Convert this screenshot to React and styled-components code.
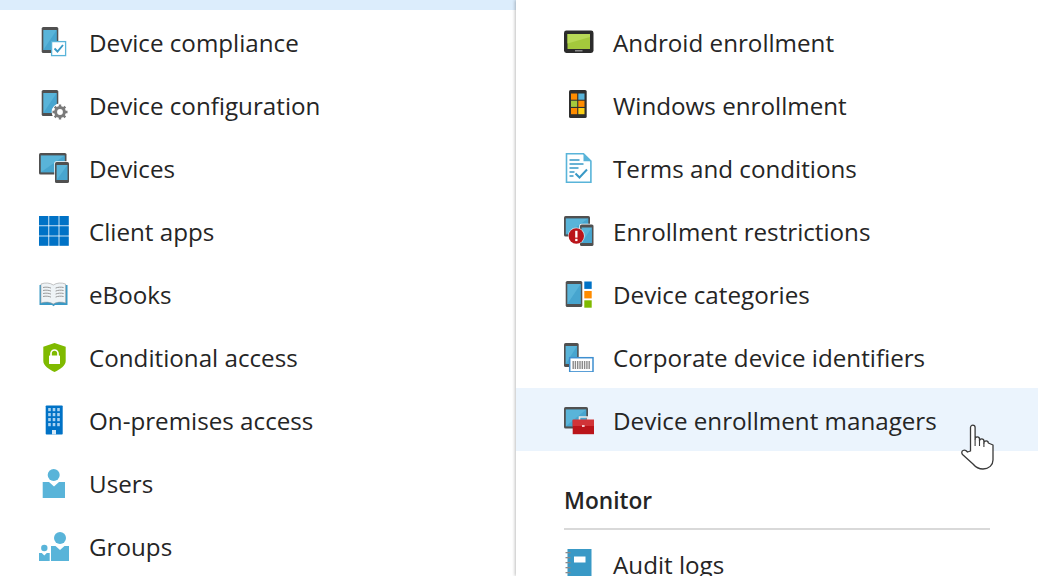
import React from "react";
import styled, { createGlobalStyle } from "styled-components";

const Global = createGlobalStyle`
  html, body { margin: 0; padding: 0; background: #fff; }
  body { width: 1038px; height: 576px; overflow: hidden; font-family: "Open Sans", "Noto Sans", sans-serif; }
`;

const Phone = ({ x, y, w, h, stroke = "#505050" }) => (
  <g>
    <rect x={x} y={y} width={w} height={h} rx="1.6" fill={stroke} />
    <rect x={x + 1.6} y={y + 3} width={w - 3.2} height={h - 6} fill="#59b4d9" />
    <path d={`M${x + w - 1.6} ${y + 3}V${y + h - 3}H${x + 1.6}Z`} fill="#3999c6" opacity=".55" />
  </g>
);

const Tablet = ({ x, y, w, h }) => (
  <g>
    <rect x={x} y={y} width={w} height={h} rx="1.6" fill="#505050" />
    <rect x={x + 1.8} y={y + 2.4} width={w - 3.6} height={h - 4.6} fill="#59b4d9" />
    <path d={`M${x + w - 1.8} ${y + 2.4}V${y + h - 2.2}H${x + 1.8}Z`} fill="#3999c6" opacity=".55" />
  </g>
);

const icons = {
  compliance: (
    <>
      <Phone x={2.7} y={0} w={16.6} h={26} />
      <rect x="12.6" y="14.6" width="14" height="14" fill="#fff" stroke="#59b4d9" strokeWidth="1.3" />
      <path d="M15.5 21.5l3 3 5.5-6.5" fill="none" stroke="#3999c6" strokeWidth="1.9" />
    </>
  ),
  configuration: (
    <>
      <Phone x={2.7} y={0} w={16.6} h={26} />
      <circle cx="21" cy="22" r="8.4" fill="#fff" />
      <circle cx="21" cy="22" r="4.4" fill="none" stroke="#7a7a7a" strokeWidth="3" />
      <path d="M21 14.5v3M21 26.5v3M13.5 22h3M25.5 22h3M15.7 16.7l2.1 2.1M24.2 25.2l2.1 2.1M26.3 16.7l-2.1 2.1M17.8 25.2l-2.1 2.1" stroke="#7a7a7a" strokeWidth="2.4" />
    </>
  ),
  devices: (
    <>
      <Tablet x={0} y={0} w={27.5} h={21.5} />
      <rect x="15.3" y="8.3" width="15" height="22" rx="2" fill="#fff" />
      <Phone x={16} y={9} w={14} h={21} />
    </>
  ),
  apps: (
    <>
      {[0, 10.2, 20.4].flatMap((y) =>
        [0, 10.2, 20.4].map((x) => <rect key={`${x}-${y}`} x={x} y={y} width="9.4" height="9.4" fill="#0072c6" />)
      )}
    </>
  ),
  books: (
    <>
      <path d="M0.5 6h28v20H16l-1.5 1.3L13 26H0.5Z" fill="#3999c6" />
      <path d="M2 5c4-1.6 9-1.3 12.3 1 3.3-2.3 8.3-2.6 12.3-1v19c-4-1.4-9-1.2-12.3 1-3.3-2.2-8.3-2.4-12.3-1Z" fill="#eef3f6" stroke="#a0a0a0" strokeWidth=".6" />
      <path d="M4 8.5c2.7-.6 5.8-.4 8 .6M4 11.5c2.7-.6 5.8-.4 8 .6M4 14.5c2.7-.6 5.8-.4 8 .6M4 17.5c2.7-.6 5.8-.4 8 .6M24.6 8.5c-2.7-.6-5.8-.4-8 .6M24.6 11.5c-2.7-.6-5.8-.4-8 .6M24.6 14.5c-2.7-.6-5.8-.4-8 .6M24.6 17.5c-2.7-.6-5.8-.4-8 .6" fill="none" stroke="#9a9a9a" strokeWidth="1" />
    </>
  ),
  shield: (
    <>
      <path d="M15.5 1l11.2 3.8v14.2c0 4.5-5.500 8.500-11.200 11-5.700-2.500-11.200-6.500-11.200-11V4.800Z" fill="#7fba00" />
      <path d="M12 14v-2.500a3.500 3.500 0 0 1 7 0V14" fill="none" stroke="#fff" strokeWidth="1.7" />
      <rect x="10" y="13.5" width="11" height="8.5" rx=".6" fill="#fff" />
    </>
  ),
  building: (
    <>
      <rect x="6.7" y=".5" width="17" height="29" rx=".8" fill="#0072c6" />
      {[3, 8, 13, 18].flatMap((y) =>
        [9.2, 13.7, 18.2].map((x) => <rect key={`${x}-${y}`} x={x} y={y} width="2.6" height="3.2" fill="#a9d3f2" />)
      )}
      <rect x="13" y="25" width="4" height="4.5" fill="#d5e8f6" />
    </>
  ),
  user: (
    <>
      <circle cx="14.7" cy="7" r="6" fill="#59b4d9" />
      <path d="M3.7 14h6.300l5 4.500 5-4.500h6v16.500H3.700Z" fill="#59b4d9" />
    </>
  ),
  group: (
    <>
      <circle cx="21" cy="7" r="6" fill="#59b4d9" />
      <path d="M12 15h4.500l4.500 4 4.500-4h4.500v15.500H12Z" fill="#59b4d9" />
      <circle cx="5.3" cy="17" r="3.2" fill="#59b4d9" />
      <path d="M0 22h2.800l2.500 2.500 2.500-2.500h2.900v8.500H0Z" fill="#59b4d9" />
    </>
  ),
  android: (
    <>
      <rect x="0" y="3.5" width="29.5" height="22.5" rx="2.4" fill="#2b2b2b" />
      <rect x="3.5" y="7" width="22.5" height="15" fill="#a4c93c" />
      <path d="M3.500 16.500L26 10V7H3.500Z" fill="#b8d957" />
      <rect x="11" y="23" width="7.5" height="1.5" fill="#8a8a8a" />
    </>
  ),
  windows: (
    <>
      <rect x="5" y="0" width="17.7" height="28" rx="1.6" fill="#2f2f2f" />
      {[
        [7, 3.5, "#ff8c00"],
        [14.3, 3.5, "#59b4d9"],
        [7, 10.7, "#a4c93c"],
        [14.3, 10.7, "#ff8c00"],
        [7, 18, "#ff8c00"],
        [14.3, 18, "#fcd116"],
      ].map(([x, y, c]) => (
        <rect key={`${x}-${y}`} x={x} y={y} width="6.2" height="6.2" fill={c} />
      ))}
    </>
  ),
  terms: (
    <>
      <path d="M2.500.8h17l7.400 7.400v21H2.500Z" fill="#fff" stroke="#59b4d9" strokeWidth="1.6" />
      <path d="M19.500.8v7.400h7.400Z" fill="#59b4d9" />
      <path d="M5.500 7h10M5.500 11h14M5.500 15h9M5.500 19h5M5.500 23h4" stroke="#3999c6" strokeWidth="1.5" />
      <path d="M11.500 20.500l4 4 7.500-8" fill="none" stroke="#3999c6" strokeWidth="2" />
    </>
  ),
  restrictions: (
    <>
      <Tablet x={0} y={0} w={26} h={20.5} />
      <rect x="15.3" y="7.8" width="15" height="22.5" rx="2" fill="#fff" />
      <Phone x={16} y={8.5} w={13.5} h={21.5} />
      <circle cx="12.3" cy="20" r="8.4" fill="#fff" opacity=".7" />
      <circle cx="12.3" cy="20" r="7.7" fill="#ba141a" />
      <rect x="11.2" y="14.8" width="2.3" height="6.8" fill="#fff" />
      <rect x="11.2" y="22.8" width="2.3" height="2.3" fill="#fff" />
    </>
  ),
  categories: (
    <>
      <Phone x={1.7} y={2} w={16.6} h={26} />
      <rect x="20.3" y="2.5" width="7.4" height="7.4" fill="#0072c6" />
      <rect x="20.3" y="12" width="7.4" height="7.4" fill="#ff8c00" />
      <rect x="20.3" y="21.3" width="7.4" height="7.4" fill="#7fba00" />
    </>
  ),
  corporate: (
    <>
      <Phone x={0} y={1} w={14.7} h={24} />
      <rect x="5.7" y="15.7" width="23.3" height="14.2" fill="#fff" stroke="#3e8fd0" strokeWidth="1.5" />
      {[8.5, 10.7, 13, 15.3, 17.6, 19.9, 22.2, 24.5].map((x) => (
        <rect key={x} x={x} y="19" width="1.4" height="8" fill="#8a8a8a" />
      ))}
    </>
  ),
  managers: (
    <>
      <Tablet x={0} y={2} w={24} h={21.5} />
      <path d="M15.500 15.500v-3.500h8v3.500" fill="none" stroke="#e8e8e8" strokeWidth="1.6" />
      <rect x="8.7" y="15" width="21.3" height="14.2" fill="#ba141a" />
      <rect x="8.7" y="14.5" width="21.3" height="6.5" fill="#d13438" />
      <rect x="18" y="20" width="2.6" height="2" fill="#f3c5c7" />
    </>
  ),
  audit: (
    <>
      <rect x="3.5" y="0" width="24" height="30" fill="#3999c6" />
      <rect x="10" y="7.5" width="11.5" height="6" fill="#fff" />
      {[3, 8, 13, 18, 23, 28].map((y) => (
        <rect key={y} x="1.5" y={y} width="5" height="1.3" fill="#8a8a8a" />
      ))}
    </>
  ),
};

const leftItems = [
  ["compliance", "Device compliance"],
  ["configuration", "Device configuration"],
  ["devices", "Devices"],
  ["apps", "Client apps"],
  ["books", "eBooks"],
  ["shield", "Conditional access"],
  ["building", "On-premises access"],
  ["user", "Users"],
  ["group", "Groups"],
];

const rightItems = [
  ["android", "Android enrollment"],
  ["windows", "Windows enrollment"],
  ["terms", "Terms and conditions"],
  ["restrictions", "Enrollment restrictions"],
  ["categories", "Device categories"],
  ["corporate", "Corporate device identifiers"],
  ["managers", "Device enrollment managers", true],
];

function Item({ icon, label, inset, gap, hovered }) {
  return (
    <Row $inset={inset} $gap={gap} $hovered={hovered}>
      <Icon viewBox="0 0 30 30">{icons[icon]}</Icon>
      <Label>{label}</Label>
    </Row>
  );
}

export default function App() {
  return (
    <Page>
      <Global />
      <LeftPane>
        <SelectedEdge />
        {leftItems.map(([icon, label]) => (
          <Item key={label} icon={icon} label={label} inset={39} gap={20} />
        ))}
      </LeftPane>
      <RightPane>
        {rightItems.map(([icon, label, hovered]) => (
          <Item key={label} icon={icon} label={label} inset={48} gap={19} hovered={hovered} />
        ))}
        <SectionTitle>Monitor</SectionTitle>
        <Item icon="audit" label="Audit logs" inset={48} gap={19} />
        <Cursor viewBox="0 0 34 46">
          <path
            d="M9.500 27V3.500a2.300 2.300 0 0 1 4.600 0V15a2.200 2.200 0 0 1 4.400 0v2a2.200 2.200 0 0 1 4.400 0v2a2.200 2.200 0 0 1 4.400 0l4.700 2v15c0 5-4 9-10 9-5 0-7.500-2-10-5L1.500 30.500c-1.200-1.500-.8-3.400.5-4 1.700-.8 3.300 0 4.500 1.500Z"
            fill="#fff"
            stroke="#3a3a3a"
            strokeWidth="1.3"
            strokeLinejoin="round"
          />
          <path d="M14.100 15v7M18.500 17v5M22.900 19v4" stroke="#3a3a3a" strokeWidth="1.1" fill="none" />
        </Cursor>
      </RightPane>
    </Page>
  );
}

const Page = styled.div`
  display: flex;
  width: 1038px;
  height: 576px;
  overflow: hidden;
  color: #252525;
`;

const LeftPane = styled.div`
  width: 516px;
  flex: none;
`;

const SelectedEdge = styled.div`
  height: 10px;
  background: #dcedfc;
`;

const RightPane = styled.div`
  position: relative;
  flex: 1;
  padding-top: 10px;
  background: #fff;
  box-shadow: -1px 0 3px rgba(0, 0, 0, 0.25);
`;

const Row = styled.div`
  display: flex;
  align-items: center;
  gap: ${(p) => p.$gap}px;
  height: 63px;
  padding-left: ${(p) => p.$inset}px;
  background: ${(p) => (p.$hovered ? "#ebf4fd" : "transparent")};
`;

const Icon = styled.svg`
  width: 30px;
  height: 30px;
  flex: none;
  filter: blur(0.35px);
`;

const Label = styled.span`
  font-size: 24.2px;
  line-height: 30px;
  position: relative;
  top: 1px;
  white-space: nowrap;
`;

const SectionTitle = styled.div`
  margin: 35px 48px 2px;
  height: 44px;
  line-height: 30px;
  font-size: 22.7px;
  font-weight: 600;
  color: #252525;
  border-bottom: 2px solid #d9d9d9;
  box-sizing: border-box;
`;

const Cursor = styled.svg`
  position: absolute;
  left: 445px;
  top: 424px;
  width: 34px;
  height: 46px;
`;
